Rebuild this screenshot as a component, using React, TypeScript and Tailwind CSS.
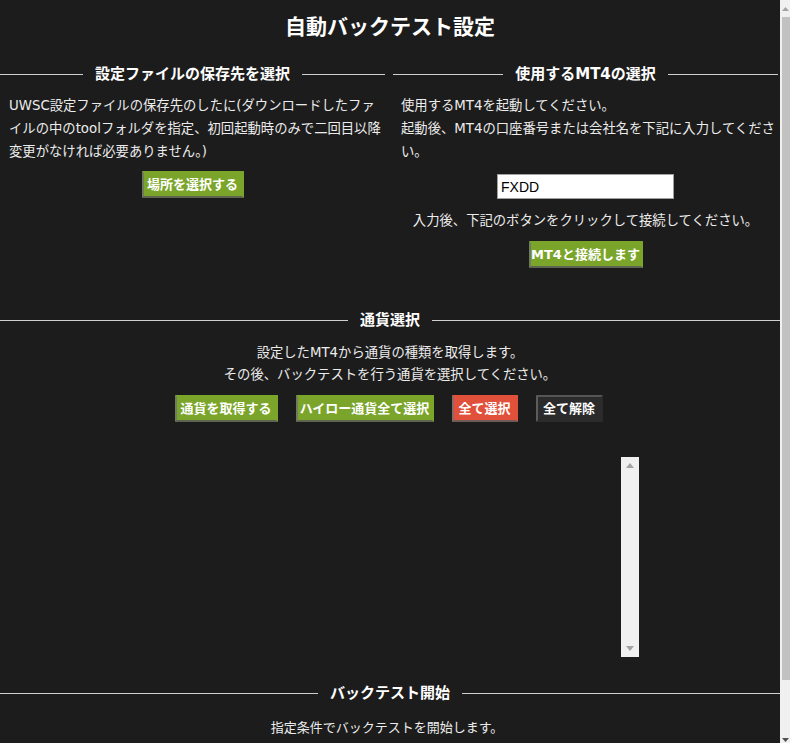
import React from "react";

function SectionHeader({ title }: { title: string }) {
  return (
    <div className="flex items-center h-[20px]">
      <div className="flex-1 h-px bg-[#cfcfcf]" />
      <div className="px-[12px] text-[15px] leading-[20px] font-bold text-white whitespace-nowrap">{title}</div>
      <div className="flex-1 h-px bg-[#cfcfcf]" />
    </div>
  );
}

const greenBtn =
  "h-[27px] bg-[#7aa52a] text-white font-bold text-[13px] leading-none border-2 border-[#7aa52a] border-l-[#6f7a5e] border-b-[#5d6552] rounded-[1px] flex items-center justify-center whitespace-nowrap";

export default function App() {
  return (
    <div className="flex w-[790px] h-[743px] overflow-hidden bg-[#1c1c1c] font-['DejaVu_Sans','Noto_Sans_CJK_JP',sans-serif] text-[#ececec]">
      <main className="w-[780px] flex flex-col">
        <h1 className="pt-[13px] text-center text-[21px] leading-[28px] font-bold text-white">自動バックテスト設定</h1>

        <div className="mt-[23px] grid grid-cols-[385px_385px] gap-x-[8px]">
          <section className="flex flex-col">
            <SectionHeader title="設定ファイルの保存先を選択" />
            <p className="mt-[10px] px-[9px] text-[13.33px] leading-[23px] whitespace-nowrap">
              UWSC設定ファイルの保存先のしたに(ダウンロードしたファ
              <br />
              イルの中のtoolフォルダを指定、初回起動時のみで二回目以降
              <br />
              変更がなければ必要ありません。)
            </p>
            <div className="mt-[8px] flex justify-center">
              <button className={greenBtn + " w-[102px]"}>場所を選択する</button>
            </div>
          </section>

          <section className="flex flex-col">
            <SectionHeader title="使用するMT4の選択" />
            <p className="mt-[10px] px-[8px] text-[13.33px] leading-[23px] whitespace-nowrap">
              使用するMT4を起動してください。
              <br />
              起動後、MT4の口座番号または会社名を下記に入力してくださ
              <br />
              い。
            </p>
            <div className="mt-[11px] flex justify-center">
              <input
                defaultValue="FXDD"
                className="w-[177px] h-[25px] bg-white text-black border border-[#a0a0a0] px-[3px] text-[14px] font-['Liberation_Sans',Arial,sans-serif] outline-none"
              />
            </div>
            <p className="mt-[10px] text-center text-[13.33px] leading-[23px]">入力後、下記のボタンをクリックして接続してください。</p>
            <div className="mt-[9px] flex justify-center">
              <button className={greenBtn + " w-[114px]"}>MT4と接続します</button>
            </div>
          </section>
        </div>

        <div className="mt-[42px]">
          <SectionHeader title="通貨選択" />
        </div>
        <p className="mt-[12px] text-center text-[13.33px] leading-[22px]">
          設定したMT4から通貨の種類を取得します。
          <br />
          その後、バックテストを行う通貨を選択してください。
        </p>
        <div className="mt-[9px] flex justify-center gap-[18px] pr-[3px]">
          <button className={greenBtn + " w-[103px]"}>通貨を取得する</button>
          <button className={greenBtn + " w-[138px]"}>ハイロー通貨全て選択</button>
          <button className="w-[66px] h-[27px] bg-[#e1503a] text-white font-bold text-[13px] leading-none border-2 border-[#e1503a] border-l-[#8a6a64] border-b-[#6e5a56] rounded-[1px] flex items-center justify-center">
            全て選択
          </button>
          <button className="w-[67px] h-[27px] bg-[#2b2b2b] text-white font-bold text-[13px] leading-none border-2 border-[#2b2b2b] border-l-[#5c5c5c] border-t-[#555555] rounded-[1px] flex items-center justify-center">
            全て解除
          </button>
        </div>

        <div className="mt-[35px] pl-[621px]">
          <div className="w-[18px] h-[200px] bg-[#f0f0f0] flex flex-col items-center justify-between py-[6px]">
            <svg width="8" height="5" viewBox="0 0 8 5"><path d="M0 5 L4 0 L8 5 Z" fill="#a3a3a3" /></svg>
            <svg width="8" height="5" viewBox="0 0 8 5"><path d="M0 0 L4 5 L8 0 Z" fill="#a3a3a3" /></svg>
          </div>
        </div>

        <div className="mt-[26px]">
          <SectionHeader title="バックテスト開始" />
        </div>
        <p className="mt-[13px] pr-[6px] text-center text-[13px] leading-[22px] font-['Noto_Sans_CJK_JP',sans-serif]">指定条件でバックテストを開始します。</p>
      </main>

      <div className="w-[10px] h-[743px] bg-[#f0f0f0] flex flex-col">
        <div className="h-[17px] flex items-center justify-center">
          <svg width="7" height="4" viewBox="0 0 7 4"><path d="M0 4 L3.5 0 L7 4 Z" fill="#a3a3a3" /></svg>
        </div>
        <div className="h-[663px] ml-[2px] bg-[#c1c1c1]" />
        <div className="flex-1 flex items-end justify-center pb-[1px]">
          <svg width="7" height="4" viewBox="0 0 7 4"><path d="M0 0 L3.5 4 L7 0 Z" fill="#505050" /></svg>
        </div>
      </div>
    </div>
  );
}
